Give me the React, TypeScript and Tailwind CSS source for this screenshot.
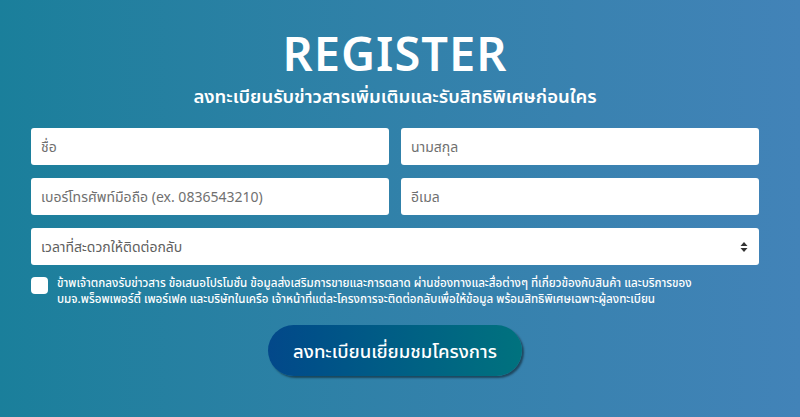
import React from "react";

export default function App() {
  const font = { fontFamily: '"Noto Sans", "Noto Sans Thai", "Loma", sans-serif' };
  return (
    <div
      className="w-[800px] h-[417px] overflow-hidden bg-gradient-to-r from-[#1a7f9b] to-[#4283b8]"
      style={font}
    >
      <div className="ml-[31px] w-[728px] flex flex-col items-center pt-[25px]">
        <h1 className="text-white font-semibold text-[47px] leading-[56px] tracking-[1px]">REGISTER</h1>
        <p className="text-white font-semibold text-[18.5px] leading-[24px] mt-[3px]">
          ลงทะเบียนรับข่าวสารเพิ่มเติมและรับสิทธิพิเศษก่อนใคร
        </p>
        <div className="w-full grid grid-cols-2 gap-x-[12px] gap-y-[13px] mt-[20px]">
          <input
            className="h-[37px] bg-white rounded-[3px] px-[10px] text-[14px] text-gray-700 placeholder:text-[#707070] outline-none"
            placeholder="ชื่อ"
          />
          <input
            className="h-[37px] bg-white rounded-[3px] px-[10px] text-[14px] text-gray-700 placeholder:text-[#707070] outline-none"
            placeholder="นามสกุล"
          />
          <input
            className="h-[37px] bg-white rounded-[3px] px-[10px] text-[14px] text-gray-700 placeholder:text-[#707070] outline-none"
            placeholder="เบอร์โทรศัพท์มือถือ (ex. 0836543210)"
          />
          <input
            className="h-[37px] bg-white rounded-[3px] px-[10px] text-[14px] text-gray-700 placeholder:text-[#707070] outline-none"
            placeholder="อีเมล"
          />
          <div className="col-span-2 h-[37px] bg-white rounded-[3px] px-[10px] flex items-center justify-between text-[14px] text-[#606060]">
            <span>เวลาที่สะดวกให้ติดต่อกลับ</span>
            <svg width="8" height="12" viewBox="0 0 8 12" className="mr-[1px]">
              <path d="M4 1 L7.5 5 H0.5 Z" fill="#333" />
              <path d="M4 11 L7.5 7 H0.5 Z" fill="#333" />
            </svg>
          </div>
        </div>
        <div className="w-full flex items-start mt-[10px]">
          <div className="w-[17px] h-[17px] bg-white rounded-[4px] shrink-0 mt-[2px]" />
          <p className="ml-[9px] text-white text-[11.6px] leading-[16px] font-medium">
            ข้าพเจ้าตกลงรับข่าวสาร ข้อเสนอโปรโมชั่น ข้อมูลส่งเสริมการขายและการตลาด ผ่านช่องทางและสื่อต่างๆ ที่เกี่ยวข้องกับสินค้า และบริการของ
            <br />
            บมจ.พร็อพเพอร์ตี้ เพอร์เฟค และบริษัทในเครือ เจ้าหน้าที่แต่ละโครงการจะติดต่อกลับเพื่อให้ข้อมูล พร้อมสิทธิพิเศษเฉพาะผู้ลงทะเบียน
          </p>
        </div>
        <button className="mt-[18px] w-[254px] h-[51px] rounded-full bg-gradient-to-r from-[#03488a] to-[#00727e] text-white text-[18.5px] font-medium shadow-[2px_2px_2px_rgba(0,0,0,0.45)]">
          ลงทะเบียนเยี่ยมชมโครงการ
        </button>
      </div>
    </div>
  );
}
